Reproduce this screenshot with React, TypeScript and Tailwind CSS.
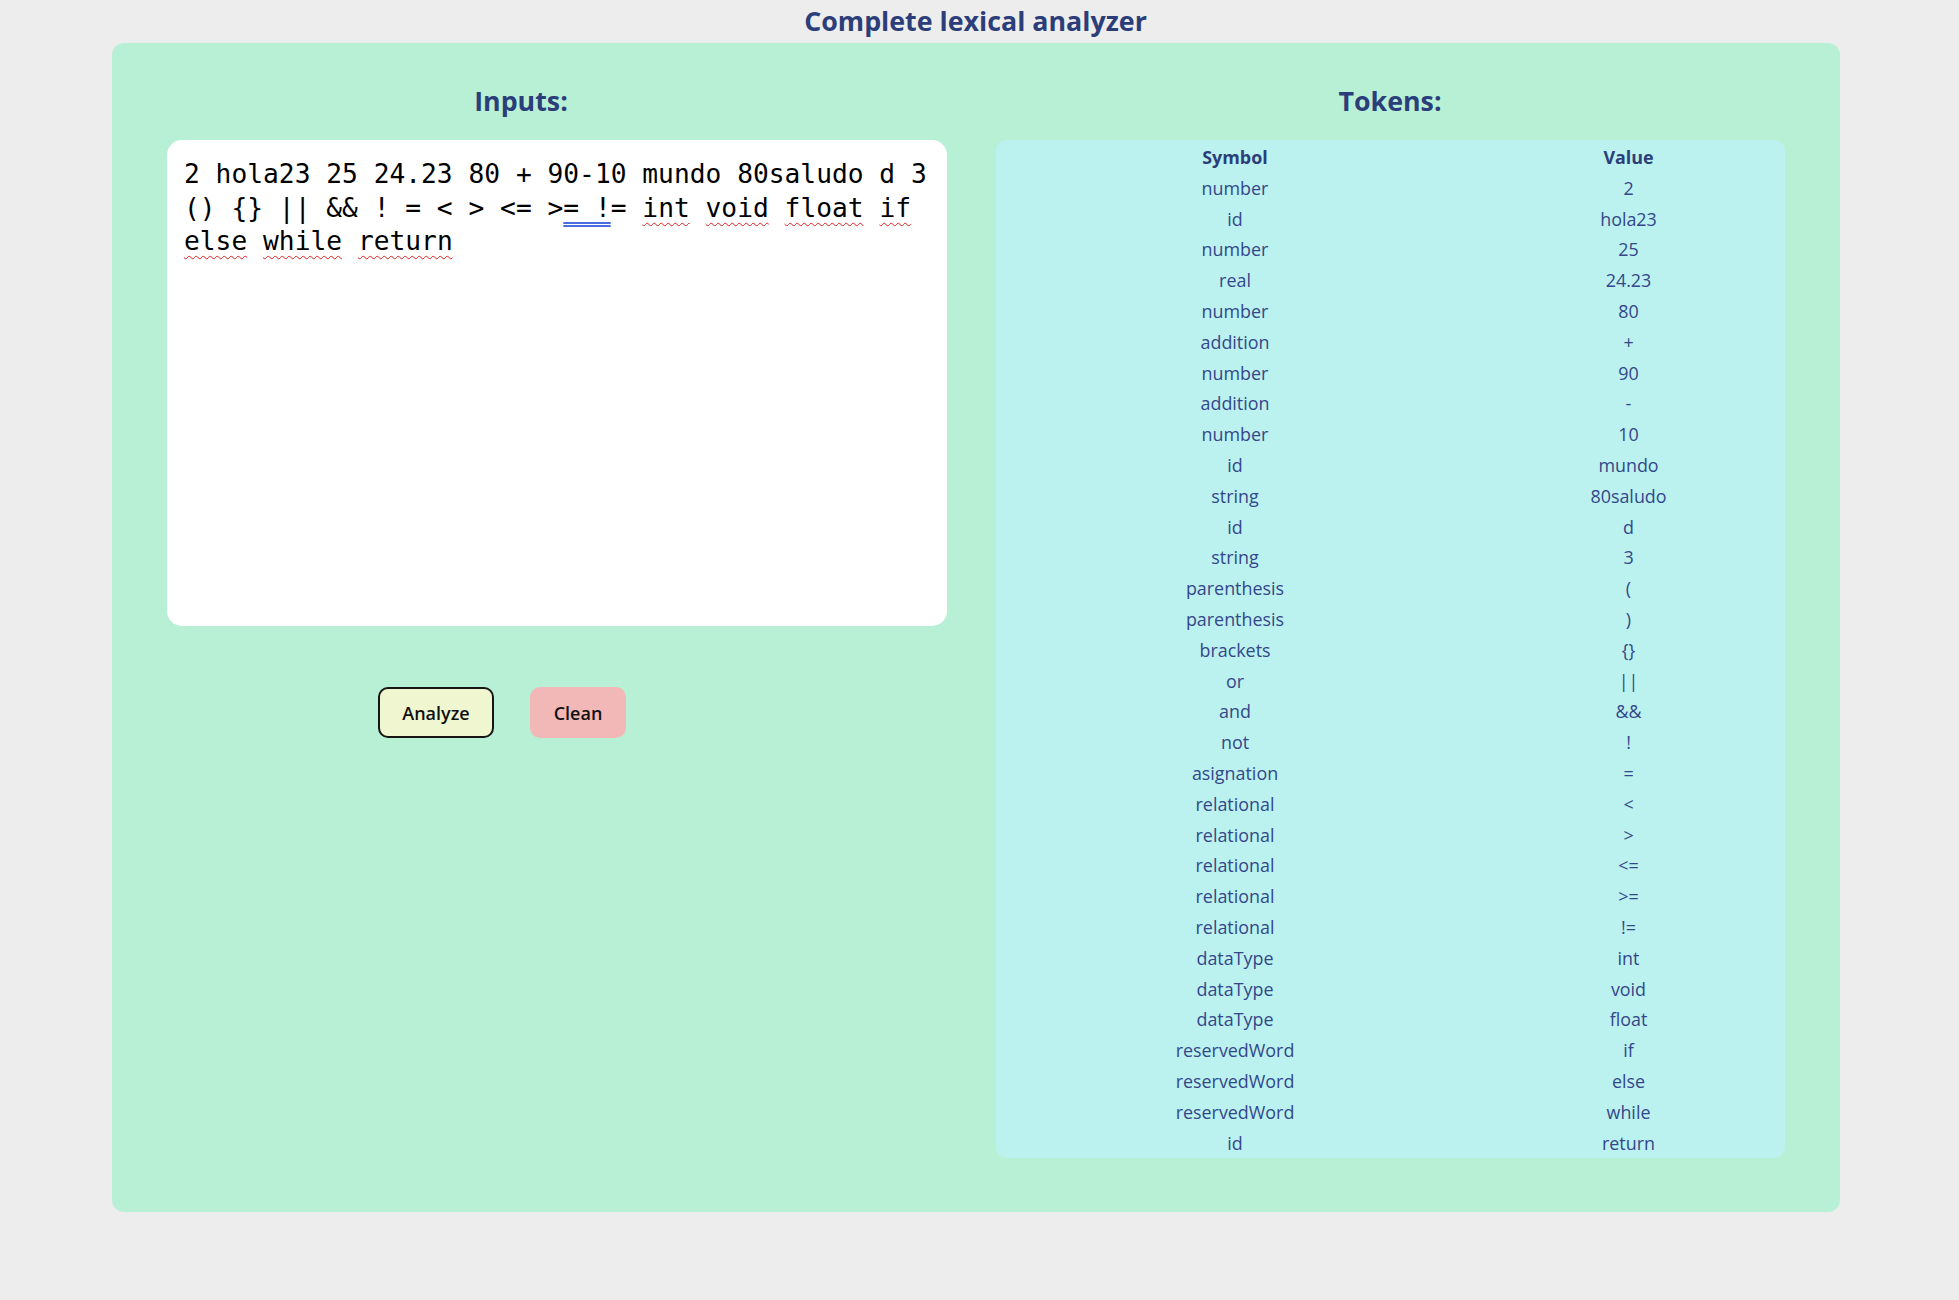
import React from "react";

const tokens: [string, string][] = [
  ["number", "2"],
  ["id", "hola23"],
  ["number", "25"],
  ["real", "24.23"],
  ["number", "80"],
  ["addition", "+"],
  ["number", "90"],
  ["addition", "-"],
  ["number", "10"],
  ["id", "mundo"],
  ["string", "80saludo"],
  ["id", "d"],
  ["string", "3"],
  ["parenthesis", "("],
  ["parenthesis", ")"],
  ["brackets", "{}"],
  ["or", "||"],
  ["and", "&&"],
  ["not", "!"],
  ["asignation", "="],
  ["relational", "<"],
  ["relational", ">"],
  ["relational", "<="],
  ["relational", ">="],
  ["relational", "!="],
  ["dataType", "int"],
  ["dataType", "void"],
  ["dataType", "float"],
  ["reservedWord", "if"],
  ["reservedWord", "else"],
  ["reservedWord", "while"],
  ["id", "return"],
];

const Sq = ({ children }: { children: React.ReactNode }) => (
  <span className="underline decoration-wavy decoration-[#e02020] decoration-1 underline-offset-[5px]">
    {children}
  </span>
);

export default function App() {
  return (
    <div className="min-h-screen bg-[#ededed] pb-[88px] font-['Open_Sans',sans-serif] text-[#2c3e7a]">
      <h1 className="flex h-[43px] items-center justify-center pr-[8px] text-[26.8px] font-bold leading-none">
        Complete lexical analyzer
      </h1>
      <div className="ml-[112px] flex h-[1169px] w-[1728px] rounded-[12px] bg-[#b8f0d6]">
        <div className="flex w-[818px] flex-col">
          <h2 className="h-[97px] pt-[39px] text-center text-[26.8px] font-bold leading-[38px]">
            Inputs:
          </h2>
          <div className="ml-[55px] h-[486px] w-[780px] whitespace-pre-wrap rounded-[15px] bg-white pl-[17px] pr-[17px] pt-[18px] font-['DejaVu_Sans_Mono',monospace] text-[26.25px] leading-[33.7px] text-black">
            {"2 hola23 25 24.23 80 + 90-10 mundo 80saludo d 3 () {} || && ! = < > <= >"}
            <span className="underline decoration-double decoration-[#4a6ee0] underline-offset-[5px]">= !</span>
            {"= "}
            <Sq>int</Sq> <Sq>void</Sq> <Sq>float</Sq> <Sq>if</Sq> <Sq>else</Sq> <Sq>while</Sq> <Sq>return</Sq>
          </div>
          <div className="mt-[61px] flex justify-center gap-[36px] pr-[38px]">
            <button className="h-[51px] w-[116px] rounded-[10px] border-2 border-[#151515] bg-[#f0f6d0] pt-[2px] text-[18px] font-semibold text-[#111]">
              Analyze
            </button>
            <button className="h-[51px] w-[96px] rounded-[10px] bg-[#f2b8b8] pt-[2px] text-[18px] font-semibold text-[#111]">
              Clean
            </button>
          </div>
        </div>
        <div className="ml-[10px] flex w-[900px] flex-col">
          <h2 className="h-[97px] pt-[39px] text-center text-[26.8px] font-bold leading-[38px]">
            Tokens:
          </h2>
          <div className="ml-[56px] h-[1018px] w-[789px] rounded-[11px] bg-[#bbf2ef] pt-[1px]">
            <table className="w-full border-separate border-spacing-[2px] text-center text-[17.9px]">
              <thead>
                <tr>
                  <th className="h-[28.8px] w-[474px] p-0 font-bold leading-[28.8px]">Symbol</th>
                  <th className="h-[28.8px] p-0 font-bold leading-[28.8px]">Value</th>
                </tr>
              </thead>
              <tbody>
                {tokens.map(([s, v], i) => (
                  <tr key={i}>
                    <td className="h-[28.8px] p-0 leading-[28.8px] text-[#34478a]">{s}</td>
                    <td className="h-[28.8px] p-0 leading-[28.8px] text-[#34478a]">{v}</td>
                  </tr>
                ))}
              </tbody>
            </table>
          </div>
        </div>
      </div>
    </div>
  );
}
